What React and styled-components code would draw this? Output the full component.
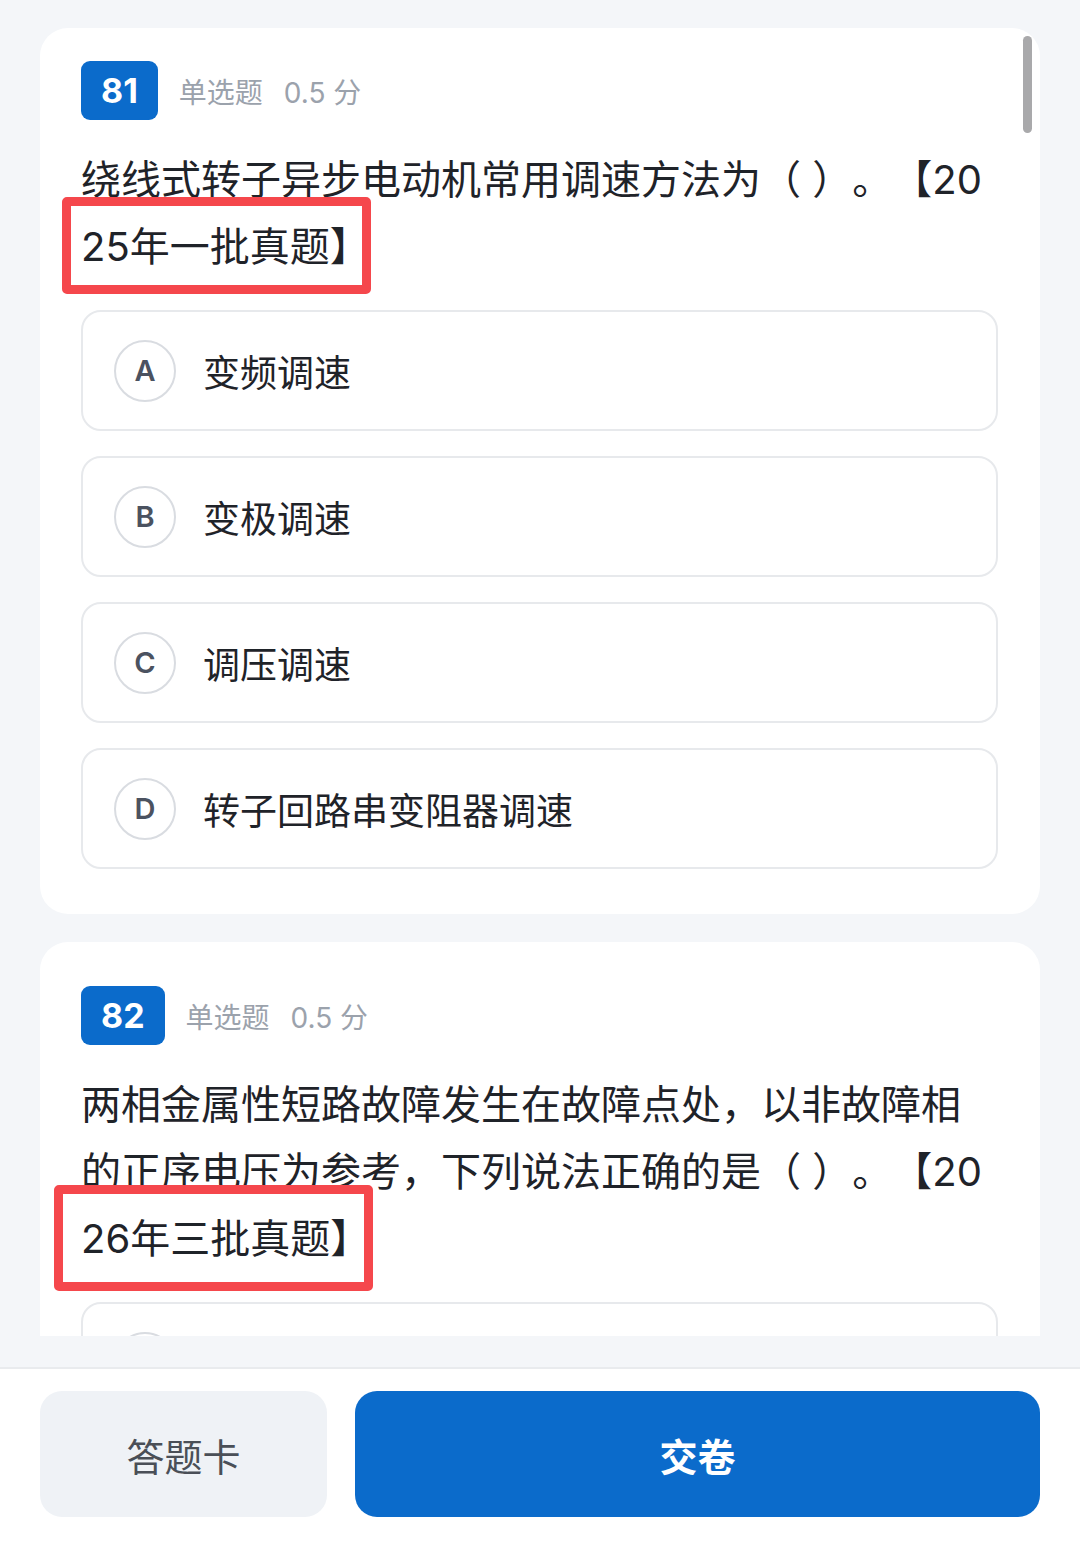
import styled, { createGlobalStyle } from "styled-components";

const GlobalStyle = createGlobalStyle`
  * { box-sizing: border-box; }
  body {
    margin: 0;
    background: #f4f6f9;
    font-family: Inter, "Noto Sans CJK SC", sans-serif;
    text-spacing-trim: space-all;
  }
`;

const questions = [
  {
    no: 81,
    top: 33,
    text: "绕线式转子异步电动机常用调速方法为（ ）。【20",
    mark: "25年一批真题】",
    box: { l: 19, r: 1, t: 25, b: 23 },
    options: [
      ["A", "变频调速"],
      ["B", "变极调速"],
      ["C", "调压调速"],
      ["D", "转子回路串变阻器调速"],
    ],
  },
  {
    no: 82,
    top: 44,
    text: "两相金属性短路故障发生在故障点处，以非故障相的正序电压为参考，下列说法正确的是（ ）。【20",
    mark: "26年三批真题】",
    box: { l: 27, r: 3, t: 29, b: 28 },
    options: [["A", ""]],
  },
];

const App = () => {
  return (
    <Page>
      <GlobalStyle />
      <Scroll>
        <ScrollThumb />
        {questions.map((q) => (
          <Card key={q.no} $top={q.top}>
            <Head>
              <Badge>{q.no}</Badge>
              <Meta>单选题</Meta>
              <Meta>0.5 分</Meta>
            </Head>
            <Question>
              {q.text}
              <Mark $l={q.box.l} $r={q.box.r} $t={q.box.t} $b={q.box.b}>
                {q.mark}
              </Mark>
            </Question>
            <Options>
              {q.options.map(([key, label]) => (
                <Option key={key}>
                  <Letter>{key}</Letter>
                  <Label>{label}</Label>
                </Option>
              ))}
            </Options>
          </Card>
        ))}
      </Scroll>
      <Spacer />
      <Footer>
        <CardButton>答题卡</CardButton>
        <SubmitButton>交卷</SubmitButton>
      </Footer>
    </Page>
  );
};

const Page = styled.div`
  width: 1080px;
  height: 1560px;
  display: flex;
  flex-direction: column;
  background: #f4f6f9;
  overflow: hidden;
`;

const Scroll = styled.main`
  position: relative;
  height: 1336px;
  flex-shrink: 0;
  overflow: hidden;
  padding: 28px 40px 0;
  display: flex;
  flex-direction: column;
  gap: 28px;
`;

const ScrollThumb = styled.div`
  position: absolute;
  top: 36px;
  right: 48px;
  width: 9px;
  height: 97px;
  border-radius: 5px;
  background: #a9a9ab;
  z-index: 2;
`;

const Card = styled.section`
  flex-shrink: 0;
  background: #ffffff;
  border-radius: 28px;
  padding: ${(p) => p.$top}px 42px 45px 41px;
`;

const Head = styled.div`
  display: flex;
  align-items: center;
  gap: 21px;
`;

const Badge = styled.div`
  height: 59px;
  padding: 0 20px;
  border-radius: 9px;
  background: #0b6bcb;
  color: #ffffff;
  font-size: 34px;
  font-weight: 700;
  display: flex;
  align-items: center;
  justify-content: center;
`;

const Meta = styled.span`
  font-size: 28px;
  color: #9ba2ac;
`;

const Question = styled.p`
  margin: 26px 0 0;
  font-size: 40px;
  line-height: 67px;
  color: #1f2329;
  word-break: break-all;
  text-spacing-trim: space-all;
`;

const Mark = styled.span`
  position: relative;
  white-space: nowrap;
  &::after {
    content: "";
    position: absolute;
    left: -${(p) => p.$l}px;
    right: -${(p) => p.$r}px;
    top: -${(p) => p.$t}px;
    bottom: -${(p) => p.$b}px;
    border: 9px solid #f5474c;
    border-radius: 5px;
    pointer-events: none;
  }
`;

const Options = styled.div`
  margin-top: 30px;
  display: flex;
  flex-direction: column;
  gap: 25px;
`;

const Option = styled.div`
  height: 121px;
  border: 2px solid #e7e9ec;
  border-radius: 20px;
  display: flex;
  align-items: center;
  padding-left: 31px;
  gap: 27px;
`;

const Letter = styled.div`
  width: 62px;
  height: 62px;
  border-radius: 50%;
  border: 2px solid #d9dce1;
  display: flex;
  align-items: center;
  justify-content: center;
  font-size: 29px;
  font-weight: 600;
  color: #4b5260;
`;

const Label = styled.span`
  font-size: 37px;
  color: #1f2329;
`;

const Spacer = styled.div`
  height: 31px;
  flex-shrink: 0;
`;

const Footer = styled.footer`
  flex: 1;
  background: #ffffff;
  border-top: 2px solid #e9ebee;
  padding: 22px 40px 0;
  display: flex;
  gap: 28px;
  align-items: flex-start;
`;

const BaseButton = styled.button`
  height: 126px;
  border: none;
  border-radius: 22px;
  font-family: Inter, "Noto Sans CJK SC", sans-serif;
  font-size: 38px;
  display: flex;
  align-items: center;
  justify-content: center;
`;

const CardButton = styled(BaseButton)`
  width: 287px;
  background: #eff2f6;
  color: #4a4f57;
`;

const SubmitButton = styled(BaseButton)`
  flex: 1;
  background: #0b6bcb;
  color: #ffffff;
  font-weight: 700;
`;

export default App;
